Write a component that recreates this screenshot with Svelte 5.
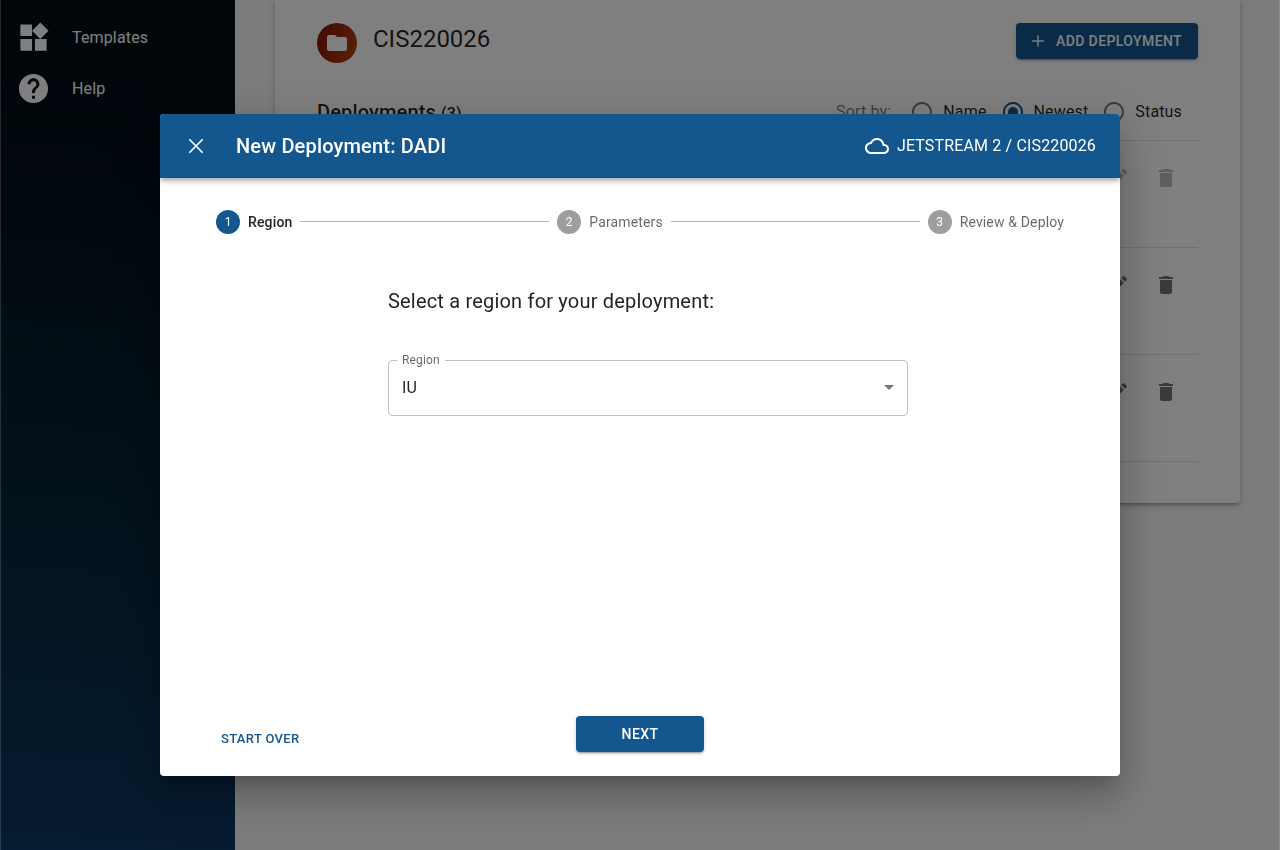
<script>
  const nav = [
    { label: 'Templates', d: 'M13 13v8h8v-8h-8zM3 21h8v-8H3v8zM3 3v8h8V3H3zm13.66-1.31L11 7.34 16.66 13l5.66-5.66-5.66-5.65z' },
    { label: 'Help', d: 'M12 2C6.48 2 2 6.48 2 12s4.48 10 10 10 10-4.48 10-10S17.52 2 12 2zm1 17h-2v-2h2v2zm2.07-7.75l-.9.92C13.45 12.9 13 13.5 13 15h-2v-.5c0-1.1.45-2.1 1.17-2.83l1.24-1.26c.37-.36.59-.86.59-1.41 0-1.1-.9-2-2-2s-2 .9-2 2H8c0-2.21 1.79-4 4-4s4 1.79 4 4c0 .88-.36 1.68-.93 2.25z' }
  ];
  const sorts = ['Name', 'Newest', 'Status'];
  const rows = [{ disabled: true }, { disabled: false }, { disabled: false }];
  const steps = ['Region', 'Parameters', 'Review & Deploy'];
  let sort = 'Newest';
  let active = 0;
</script>

<div class="page">
  <nav class="sidebar">
    {#each nav as item}
      <a class="nav-item" href="#top">
        <svg viewBox="0 0 24 24"><path d={item.d} /></svg>
        <span>{item.label}</span>
      </a>
    {/each}
  </nav>
  <main>
    <section class="card">
      <header class="card-head">
        <div class="avatar">
          <svg viewBox="0 0 24 24"><path d="M10 4H4c-1.1 0-1.99.9-1.99 2L2 18c0 1.1.9 2 2 2h16c1.1 0 2-.9 2-2V8c0-1.1-.9-2-2-2h-8l-2-2z" /></svg>
        </div>
        <h1>CIS220026</h1>
        <button class="contained add">
          <svg viewBox="0 0 24 24"><path d="M19 12.8h-6.2V19h-1.6v-6.2H5v-1.6h6.2V5h1.6v6.2H19z" /></svg>
          Add Deployment
        </button>
      </header>
      <div class="sort-bar">
        <h2>Deployments <small>(3)</small></h2>
        <span class="sort-label">Sort by:</span>
        {#each sorts as s}
          <span class="radio" class:on={s === sort}>
            <svg viewBox="0 0 24 24">
              <path d="M12 2C6.48 2 2 6.48 2 12s4.48 10 10 10 10-4.48 10-10S17.52 2 12 2zm0 18c-4.42 0-8-3.58-8-8s3.58-8 8-8 8 3.58 8 8-3.58 8-8 8z" />
              {#if s === sort}<circle cx="12" cy="12" r="5" />{/if}
            </svg>
            {s}
          </span>
        {/each}
      </div>
      {#each rows as row}
        <div class="row" class:disabled={row.disabled}>
          <svg viewBox="0 0 24 24"><path d="M3 17.25V21h3.75L17.81 9.94l-3.75-3.75L3 17.25zM20.71 7.04c.39-.39.39-1.02 0-1.41l-2.34-2.34a.9959.9959 0 0 0-1.41 0l-1.83 1.83 3.75 3.75 1.83-1.83z" /></svg>
          <svg viewBox="0 0 24 24"><path d="M6 19c0 1.1.9 2 2 2h8c1.1 0 2-.9 2-2V7H6v12zM19 4h-3.5l-1-1h-5l-1 1H5v2h14V4z" /></svg>
        </div>
      {/each}
    </section>
  </main>
</div>

<div class="backdrop">
  <div class="dialog" role="dialog" aria-modal="true">
    <header class="bar">
      <svg class="close" viewBox="0 0 24 24"><path d="M5.3 5.3l13.4 13.4M18.7 5.3L5.3 18.7" /></svg>
      <h2>New Deployment: DADI</h2>
      <svg class="cloud" viewBox="0 0 24 24"><path d="M19.35 10.04C18.67 6.59 15.64 4 12 4 9.11 4 6.6 5.64 5.35 8.04 2.34 8.36 0 10.91 0 14c0 3.31 2.69 6 6 6h13c2.76 0 5-2.24 5-5 0-2.64-2.05-4.78-4.65-4.96zM19 18H6c-2.21 0-4-1.79-4-4 0-2.05 1.53-3.76 3.56-3.97l1.07-.11.5-.95C8.08 7.14 9.94 6 12 6c2.62 0 4.88 1.86 5.39 4.43l.3 1.5 1.53.11c1.56.1 2.78 1.41 2.78 2.96 0 1.65-1.35 3-3 3z" /></svg>
      <span class="project">JETSTREAM 2 / CIS220026</span>
    </header>
    <div class="stepper">
      {#each steps as step, i}
        {#if i > 0}<span class="line"></span>{/if}
        <div class="step" class:active={i === active}>
          <span class="num">{i + 1}</span>
          <span>{step}</span>
        </div>
      {/each}
    </div>
    <div class="content">
      <h3>Select a region for your deployment:</h3>
      <fieldset class="select">
        <legend>Region</legend>
        <span>IU</span>
        <svg viewBox="0 0 24 24"><path d="M7 10l5 5 5-5z" /></svg>
      </fieldset>
    </div>
    <footer>
      <button class="text">Start Over</button>
      <button class="contained next">Next</button>
    </footer>
  </div>
</div>

<style>
  :global(body) { margin: 0; overflow: hidden; }
  :global(#app) { font-family: Roboto, sans-serif; color: rgba(0, 0, 0, 0.87); }
  h1, h2, h3 { margin: 0; font-weight: 400; white-space: nowrap; }
  svg { display: block; flex: none; width: 24px; height: 24px; fill: currentColor; }
  button { border: 0; margin: 0; padding: 0; font: 500 14px/24px Roboto, sans-serif; letter-spacing: 0.4px; text-transform: uppercase; white-space: nowrap; }

  .page { display: flex; height: 850px; background: #f8f8f8; overflow: hidden; }
  .sidebar { box-sizing: border-box; flex: none; width: 235px; padding-top: 12px; background: linear-gradient(185deg, #000b12 0%, #020f19 20%, #08253a 62%, #0b3763 100%); }
  .nav-item { display: flex; align-items: center; height: 51px; padding-left: 16px; color: #fff; text-decoration: none; font-size: 16px; letter-spacing: 0.15px; }
  .nav-item svg { width: 35px; height: 35px; margin-right: 21px; }

  main { flex: 1; padding: 0 40px; }
  .card { box-sizing: border-box; height: 503px; padding: 0 42px; background: #fff; border-radius: 0 0 4px 4px; box-shadow: 0 3px 3px -2px rgba(0,0,0,.2), 0 3px 4px rgba(0,0,0,.14), 0 1px 8px rgba(0,0,0,.12); }
  .card-head { display: flex; align-items: flex-start; height: 83px; padding-top: 23px; box-sizing: border-box; }
  .avatar { display: grid; place-items: center; width: 40px; height: 40px; border-radius: 50%; color: #fff; background: linear-gradient(110deg, #860f08, #b4470c); }
  h1 { flex: 1; margin-left: 16px; font-size: 24px; line-height: 32px; }
  .contained { display: flex; align-items: center; justify-content: center; height: 36px; border-radius: 4px; color: #fff; background: #14578f; box-shadow: 0 3px 1px -2px rgba(0,0,0,.2), 0 2px 2px rgba(0,0,0,.14), 0 1px 5px rgba(0,0,0,.12); }
  .add { width: 182px; }
  .add svg { width: 20px; height: 20px; margin: 0 8px 0 -4px; }

  .sort-bar { display: flex; align-items: center; height: 57px; border-bottom: 1px solid #e0e0e0; font-size: 16px; letter-spacing: 0.15px; }
  .sort-bar h2 { flex: 1; font-size: 20px; font-weight: 500; letter-spacing: 0.15px; }
  .sort-bar small { font-size: 16px; }
  .sort-label { margin-right: 5px; color: rgba(0,0,0,.54); }
  .radio { display: flex; align-items: center; gap: 9px; padding: 0 16px 0 14px; }
  .radio + .radio { padding-left: 0; margin-left: -2px; }
  .radio svg { color: rgba(0,0,0,.54); }
  .radio.on svg { color: #14578f; }
  .row { display: flex; justify-content: flex-end; gap: 24px; height: 81px; padding: 25px 20px 0 0; border-bottom: 1px solid #e0e0e0; color: #737373; }
  .row.disabled { color: #bdbdbd; }

  .backdrop { position: fixed; inset: 0; display: flex; align-items: flex-start; justify-content: center; border: solid rgba(255,255,255,.15); border-width: 0 1px; background: rgba(0,0,0,.5); }
  .dialog { display: flex; flex-direction: column; width: 960px; height: 662px; margin-top: 114px; border-radius: 4px; overflow: hidden; background: #fff; box-shadow: 0 11px 15px -7px rgba(0,0,0,.2), 0 24px 38px 3px rgba(0,0,0,.14), 0 9px 46px 8px rgba(0,0,0,.12); }
  .bar { display: flex; align-items: center; flex: none; height: 64px; padding: 0 24px; box-sizing: border-box; color: #fff; background: #14578f; box-shadow: 0 2px 4px -1px rgba(0,0,0,.2), 0 4px 5px rgba(0,0,0,.14), 0 1px 10px rgba(0,0,0,.12); }
  .close { stroke: #fff; stroke-width: 1.6; }
  .bar h2 { flex: 1; margin-left: 28px; font-size: 20px; font-weight: 500; letter-spacing: 0.17px; }
  .cloud { margin-right: 8px; }
  .project { padding-bottom: 2px; font-size: 16px; letter-spacing: 0.15px; }

  .stepper { display: flex; align-items: center; height: 24px; margin: 32px 56px 0; }
  .step { display: flex; align-items: center; gap: 8px; font-size: 14px; letter-spacing: 0.15px; color: rgba(0,0,0,.6); white-space: nowrap; }
  .step.active { color: rgba(0,0,0,.87); font-weight: 500; }
  .num { display: grid; place-items: center; width: 24px; height: 24px; border-radius: 50%; background: #9e9e9e; color: #fff; font-size: 12px; font-weight: 400; letter-spacing: 0; }
  .active .num { background: #14578f; }
  .line { flex: 1; height: 1px; margin: 0 8px 1px; background: #b4b4b4; }

  .content { flex: 1; width: 520px; margin: 51px 0 0 228px; }
  h3 { font-size: 20px; line-height: 32px; letter-spacing: 0.19px; }
  .select { display: flex; align-items: center; box-sizing: border-box; height: 63px; margin: 36px 0 0; padding: 0 6px 8px 13px; border: 1px solid #c0c0c0; border-radius: 4px; font-size: 16px; letter-spacing: 0.15px; }
  .select legend { margin-left: -5px; padding: 0 5px; font-size: 12px; line-height: 14px; letter-spacing: 0.15px; color: rgba(0,0,0,.6); }
  .select span { flex: 1; }
  .select svg { color: rgba(0,0,0,.54); }

  footer { display: grid; grid-template-columns: 1fr 128px 1fr; height: 60px; }
  .text { justify-self: start; align-self: start; margin: 11px 0 0 61px; color: #14578f; background: none; font-size: 13px; letter-spacing: 0.33px; }
  .next { width: 128px; }
</style>
